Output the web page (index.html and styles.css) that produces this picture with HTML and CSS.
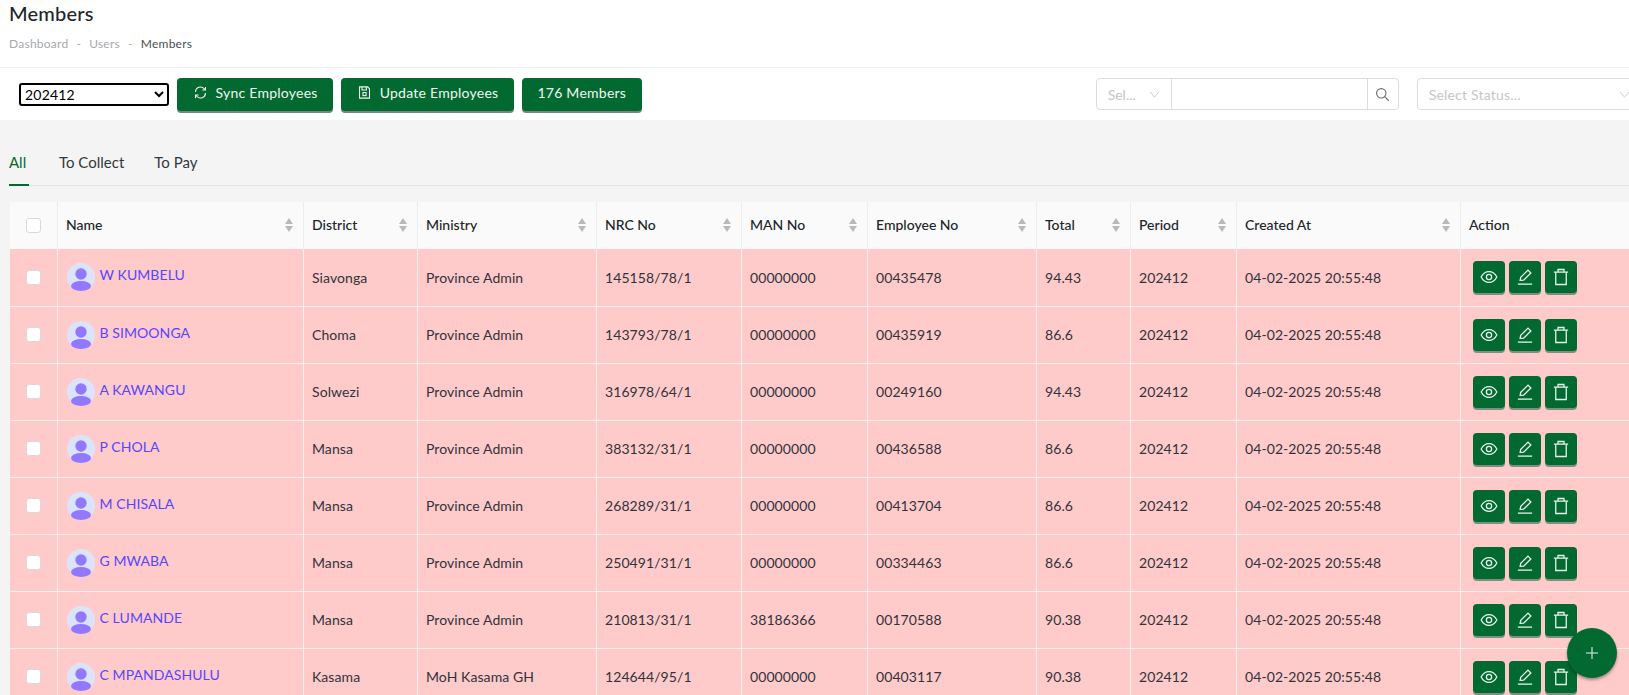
FILE: index.html
```html
<!DOCTYPE html>
<html lang="en">

<head>
    <meta charset="UTF-8">
    <title>Members</title>
    <link rel="stylesheet" href="styles.css">
</head>

<body>
    <svg class="sprite" xmlns="http://www.w3.org/2000/svg">
        <symbol id="icon-eye" viewBox="0 0 24 24">
            <path d="M1.5 12C4 7.2 7.6 4.8 12 4.8s8 2.400 10.500 7.200c-2.500 4.800-6.100 7.200-10.500 7.200S4 16.800 1.500 12z" />
            <circle cx="12" cy="12" r="3.500" />
        </symbol>
        <symbol id="icon-edit" viewBox="0 0 24 24">
            <path d="M5.500 16.500l.8-4L16 2.800l3.800 3.800-9.700 9.700z" />
            <path d="M2.500 21.500h19" />
        </symbol>
        <symbol id="icon-trash" viewBox="0 0 24 24">
            <path d="M2.500 5.500h19" />
            <path d="M8 5.500V2h8v3.500" />
            <path d="M5 5.500V22h14V5.500" />
        </symbol>
        <symbol id="icon-avatar" viewBox="0 0 28 28">
            <circle cx="14" cy="14" r="14" fill="#dbe4fb" />
            <circle cx="14" cy="11" r="5.700" fill="#9277ff" />
            <ellipse cx="14" cy="23" rx="10" ry="5" fill="#9277ff" />
        </symbol>
    </svg>

    <div class="page">
        <header class="page-head">
            <h1 class="page-head__title">Members</h1>
            <nav class="crumbs">
                <span>Dashboard</span>
                <span>-</span>
                <span>Users</span>
                <span>-</span>
                <span class="crumbs__current">Members</span>
            </nav>
        </header>

        <div class="toolbar">
            <select class="period">
                <option>202412</option>
            </select>
            <button class="btn">
                <svg class="btn__icon" viewBox="0 0 24 24">
                    <path d="M4 11a8 8 0 0 1 14-5l2 2" />
                    <path d="M20 3v5h-5" />
                    <path d="M20 13a8 8 0 0 1-14 5l-2-2" />
                    <path d="M4 21v-5h5" />
                </svg>
                Sync Employees
            </button>
            <button class="btn">
                <svg class="btn__icon" viewBox="0 0 24 24">
                    <path d="M4 3h13l3 3v15H4z" />
                    <path d="M8 3v5h7V3" />
                    <rect x="9.500" y="12" width="5" height="5" />
                </svg>
                Update Employees
            </button>
            <button class="btn">176 Members</button>

            <div class="search">
                <div class="search__type">
                    <span>Sel...</span>
                    <svg class="chevron" viewBox="0 0 12 8">
                        <path d="M1 1l5 6 5-6" />
                    </svg>
                </div>
                <div class="search__input"></div>
                <div class="search__btn">
                    <svg viewBox="0 0 24 24">
                        <circle cx="10" cy="10" r="7.500" />
                        <path d="M15.500 15.500L22 22" />
                    </svg>
                </div>
            </div>

            <div class="status">
                <span>Select Status...</span>
                <svg class="chevron" viewBox="0 0 12 8">
                    <path d="M1 1l5 6 5-6" />
                </svg>
            </div>
        </div>

        <main class="content">
            <div class="tabs">
                <a class="tabs__item tabs__item--active">All</a>
                <a class="tabs__item">To Collect</a>
                <a class="tabs__item">To Pay</a>
            </div>

            <table class="members">
                <colgroup>
                    <col class="col-check">
                    <col class="col-name">
                    <col class="col-district">
                    <col class="col-ministry">
                    <col class="col-nrc">
                    <col class="col-man">
                    <col class="col-emp">
                    <col class="col-total">
                    <col class="col-period">
                    <col class="col-created">
                    <col class="col-action">
                </colgroup>
                <thead>
                    <tr>
                        <th><span class="check"></span></th>
                        <th class="sort">Name</th>
                        <th class="sort">District</th>
                        <th class="sort">Ministry</th>
                        <th class="sort">NRC No</th>
                        <th class="sort">MAN No</th>
                        <th class="sort">Employee No</th>
                        <th class="sort">Total</th>
                        <th class="sort">Period</th>
                        <th class="sort">Created At</th>
                        <th>Action</th>
                    </tr>
                </thead>
                <tbody>
                    <tr>
                        <td><span class="check"></span></td>
                        <td><div class="person"><svg class="person__pic"><use href="#icon-avatar" /></svg><a class="person__name">W KUMBELU</a></div></td>
                        <td>Siavonga</td>
                        <td>Province Admin</td>
                        <td>145158/78/1</td>
                        <td>00000000</td>
                        <td>00435478</td>
                        <td>94.43</td>
                        <td>202412</td>
                        <td>04-02-2025 20:55:48</td>
                        <td><div class="actions"><a class="act"><svg><use href="#icon-eye" /></svg></a><a class="act"><svg><use href="#icon-edit" /></svg></a><a class="act"><svg><use href="#icon-trash" /></svg></a></div></td>
                    </tr>
                    <tr>
                        <td><span class="check"></span></td>
                        <td><div class="person"><svg class="person__pic"><use href="#icon-avatar" /></svg><a class="person__name">B SIMOONGA</a></div></td>
                        <td>Choma</td>
                        <td>Province Admin</td>
                        <td>143793/78/1</td>
                        <td>00000000</td>
                        <td>00435919</td>
                        <td>86.6</td>
                        <td>202412</td>
                        <td>04-02-2025 20:55:48</td>
                        <td><div class="actions"><a class="act"><svg><use href="#icon-eye" /></svg></a><a class="act"><svg><use href="#icon-edit" /></svg></a><a class="act"><svg><use href="#icon-trash" /></svg></a></div></td>
                    </tr>
                    <tr>
                        <td><span class="check"></span></td>
                        <td><div class="person"><svg class="person__pic"><use href="#icon-avatar" /></svg><a class="person__name">A KAWANGU</a></div></td>
                        <td>Solwezi</td>
                        <td>Province Admin</td>
                        <td>316978/64/1</td>
                        <td>00000000</td>
                        <td>00249160</td>
                        <td>94.43</td>
                        <td>202412</td>
                        <td>04-02-2025 20:55:48</td>
                        <td><div class="actions"><a class="act"><svg><use href="#icon-eye" /></svg></a><a class="act"><svg><use href="#icon-edit" /></svg></a><a class="act"><svg><use href="#icon-trash" /></svg></a></div></td>
                    </tr>
                    <tr>
                        <td><span class="check"></span></td>
                        <td><div class="person"><svg class="person__pic"><use href="#icon-avatar" /></svg><a class="person__name">P CHOLA</a></div></td>
                        <td>Mansa</td>
                        <td>Province Admin</td>
                        <td>383132/31/1</td>
                        <td>00000000</td>
                        <td>00436588</td>
                        <td>86.6</td>
                        <td>202412</td>
                        <td>04-02-2025 20:55:48</td>
                        <td><div class="actions"><a class="act"><svg><use href="#icon-eye" /></svg></a><a class="act"><svg><use href="#icon-edit" /></svg></a><a class="act"><svg><use href="#icon-trash" /></svg></a></div></td>
                    </tr>
                    <tr>
                        <td><span class="check"></span></td>
                        <td><div class="person"><svg class="person__pic"><use href="#icon-avatar" /></svg><a class="person__name">M CHISALA</a></div></td>
                        <td>Mansa</td>
                        <td>Province Admin</td>
                        <td>268289/31/1</td>
                        <td>00000000</td>
                        <td>00413704</td>
                        <td>86.6</td>
                        <td>202412</td>
                        <td>04-02-2025 20:55:48</td>
                        <td><div class="actions"><a class="act"><svg><use href="#icon-eye" /></svg></a><a class="act"><svg><use href="#icon-edit" /></svg></a><a class="act"><svg><use href="#icon-trash" /></svg></a></div></td>
                    </tr>
                    <tr>
                        <td><span class="check"></span></td>
                        <td><div class="person"><svg class="person__pic"><use href="#icon-avatar" /></svg><a class="person__name">G MWABA</a></div></td>
                        <td>Mansa</td>
                        <td>Province Admin</td>
                        <td>250491/31/1</td>
                        <td>00000000</td>
                        <td>00334463</td>
                        <td>86.6</td>
                        <td>202412</td>
                        <td>04-02-2025 20:55:48</td>
                        <td><div class="actions"><a class="act"><svg><use href="#icon-eye" /></svg></a><a class="act"><svg><use href="#icon-edit" /></svg></a><a class="act"><svg><use href="#icon-trash" /></svg></a></div></td>
                    </tr>
                    <tr>
                        <td><span class="check"></span></td>
                        <td><div class="person"><svg class="person__pic"><use href="#icon-avatar" /></svg><a class="person__name">C LUMANDE</a></div></td>
                        <td>Mansa</td>
                        <td>Province Admin</td>
                        <td>210813/31/1</td>
                        <td>38186366</td>
                        <td>00170588</td>
                        <td>90.38</td>
                        <td>202412</td>
                        <td>04-02-2025 20:55:48</td>
                        <td><div class="actions"><a class="act"><svg><use href="#icon-eye" /></svg></a><a class="act"><svg><use href="#icon-edit" /></svg></a><a class="act"><svg><use href="#icon-trash" /></svg></a></div></td>
                    </tr>
                    <tr>
                        <td><span class="check"></span></td>
                        <td><div class="person"><svg class="person__pic"><use href="#icon-avatar" /></svg><a class="person__name">C MPANDASHULU</a></div></td>
                        <td>Kasama</td>
                        <td>MoH Kasama GH</td>
                        <td>124644/95/1</td>
                        <td>00000000</td>
                        <td>00403117</td>
                        <td>90.38</td>
                        <td>202412</td>
                        <td>04-02-2025 20:55:48</td>
                        <td><div class="actions"><a class="act"><svg><use href="#icon-eye" /></svg></a><a class="act"><svg><use href="#icon-edit" /></svg></a><a class="act"><svg><use href="#icon-trash" /></svg></a></div></td>
                    </tr>
                </tbody>
            </table>
        </main>
    </div>

    <a class="fab">
        <svg viewBox="0 0 24 24">
            <path d="M12 3v18M3 12h18" />
        </svg>
    </a>
</body>

</html>
```

FILE: styles.css
```css
* {
    padding: 0;
    margin: 0;
    box-sizing: border-box;
}

html,
body {
    height: 100%;
    overflow: hidden;
}

body {
    background-color: #f4f4f4;
    color: #2b2f33;
    font-family: "Lato", "Open Sans", sans-serif;
    font-size: 14px;
}

.sprite {
    display: none;
}

.page {
    width: 1660px;
}

/* Title and breadcrumb */
.page-head {
    background-color: #fff;
    height: 68px;
    padding: 1px 9px 0;
    border-bottom: 1px solid #eef0f2;
}

.page-head__title {
    font-size: 20px;
    line-height: 24px;
    font-weight: 500;
    color: #212529;
    letter-spacing: 0.2px;
}

.crumbs {
    display: flex;
    gap: 8px;
    margin-top: 11px;
    font-size: 12px;
    line-height: 16px;
    letter-spacing: 0.25px;
    color: #a6a9ad;
}

.crumbs__current {
    color: #495057;
}

/* Toolbar */
.toolbar {
    background-color: #fff;
    height: 52px;
    padding: 10px 0 0 19px;
    display: flex;
    align-items: flex-start;
    gap: 8px;
}

.period {
    width: 150px;
    height: 23px;
    margin: 5px 0 0;
    padding-bottom: 1px;
    border: 2px solid #000;
    border-radius: 3px;
    background-color: #fff;
    color: #000;
    font-family: "Lato", sans-serif;
    font-size: 14px;
    letter-spacing: 0.2px;
}

.btn {
    height: 33px;
    padding: 0 15.500px 4px;
    display: flex;
    align-items: center;
    gap: 8px;
    border: 0;
    border-radius: 4px;
    background-color: #026a30;
    box-shadow: 0 2px 0 #6f8c79;
    color: #f1f6f3;
    font-family: "Lato", sans-serif;
    font-size: 14px;
    letter-spacing: 0.25px;
}

.btn__icon {
    width: 15px;
    height: 15px;
    fill: none;
    stroke: #f1f6f3;
    stroke-width: 1.700;
}

.search {
    width: 303px;
    height: 32px;
    margin-left: 446px;
    display: flex;
    border: 1px solid #dcdcdc;
    border-radius: 4px;
    background-color: #fff;
}

.search__type {
    width: 75px;
    padding: 0 11px;
    display: flex;
    align-items: center;
    justify-content: space-between;
    border-right: 1px solid #dcdcdc;
    color: #c4c6c8;
    font-size: 14px;
}

.search__input {
    flex: 1;
}

.search__btn {
    width: 31px;
    display: flex;
    align-items: center;
    justify-content: center;
    border-left: 1px solid #dcdcdc;
}

.search__btn svg {
    width: 15px;
    height: 15px;
    fill: none;
    stroke: #6c7075;
    stroke-width: 1.800;
}

.chevron {
    width: 11px;
    height: 7px;
    fill: none;
    stroke: #c4c6c8;
    stroke-width: 1;
}

.status {
    width: 225px;
    height: 32px;
    margin-left: 10px;
    padding: 0 11px;
    display: flex;
    align-items: center;
    justify-content: space-between;
    border: 1px solid #dcdcdc;
    border-radius: 4px;
    background-color: #fff;
    color: #c4c6c8;
    font-size: 14px;
    letter-spacing: 0.2px;
}

/* Tabs and table */
.content {
    padding: 28px 0 0 9px;
}

.tabs {
    display: flex;
    gap: 30px;
    height: 38px;
    border-bottom: 1px solid #e4e4e4;
}

.tabs__item {
    height: 38px;
    padding-top: 4px;
    font-size: 15px;
    line-height: 20px;
    color: #33383d;
}

.tabs__item--active {
    width: 20px;
    color: #026a30;
    border-bottom: 2px solid #026a30;
}

.members {
    width: 1630px;
    margin: 16px 0 0 1px;
    table-layout: fixed;
    border-collapse: collapse;
    font-size: 14px;
}

.col-check { width: 47px; }
.col-name { width: 246px; }
.col-district { width: 114px; }
.col-ministry { width: 179px; }
.col-nrc { width: 145px; }
.col-man { width: 126px; }
.col-emp { width: 169px; }
.col-total { width: 94px; }
.col-period { width: 106px; }
.col-created { width: 224px; }
.col-action { width: 180px; }

.members th {
    height: 47px;
    padding: 0 8.500px 3px;
    background-color: #fafafa;
    border-right: 1px solid #eeeeee;
    text-align: left;
    font-weight: 500;
    color: #212529;
    position: relative;
}

.members td {
    height: 57px;
    padding: 0 8.500px;
    background-color: #ffcaca;
    border-right: 1px solid #f7f0f0;
    border-bottom: 1px solid #f7f0f0;
    color: #30343a;
    letter-spacing: 0.08px;
}

.members th:first-child,
.members td:first-child {
    padding: 0 0 0 16px;
}

.check {
    display: block;
    width: 15px;
    height: 15px;
    border: 1px solid #d9d9d9;
    border-radius: 3px;
    background-color: #fff;
}

/* Sort arrows */
.sort::before,
.sort::after {
    content: "";
    position: absolute;
    right: 10px;
    border-left: 4px solid transparent;
    border-right: 4px solid transparent;
}

.sort::before {
    top: 16px;
    border-bottom: 6px solid #b9b9b9;
}

.sort::after {
    top: 24px;
    border-top: 6px solid #b9b9b9;
}

.person {
    display: flex;
    align-items: center;
    gap: 5px;
    padding-left: 0.500px;
}

.person__pic {
    width: 28px;
    height: 28px;
    flex-shrink: 0;
}

.person__name {
    margin-top: -5px;
    color: #5647ff;
}

.actions {
    display: flex;
    gap: 4px;
    padding-left: 4px;
}

.act {
    width: 32px;
    height: 32px;
    display: flex;
    align-items: center;
    justify-content: center;
    border-radius: 4px;
    background-color: #026a30;
    box-shadow: 0 2px 0 #7d8f80;
}

.act svg {
    width: 18px;
    height: 18px;
    fill: none;
    stroke: #eaf2ed;
    stroke-width: 1.700;
}

.fab {
    position: fixed;
    left: 1567px;
    top: 628px;
    width: 50px;
    height: 50px;
    display: flex;
    align-items: center;
    justify-content: center;
    border-radius: 50%;
    background-color: #026a30;
    box-shadow: 0 2px 3px rgba(0, 0, 0, 0.35);
}

.fab svg {
    width: 16px;
    height: 16px;
    fill: none;
    stroke: #e6efe9;
    stroke-width: 1.600;
}
```
